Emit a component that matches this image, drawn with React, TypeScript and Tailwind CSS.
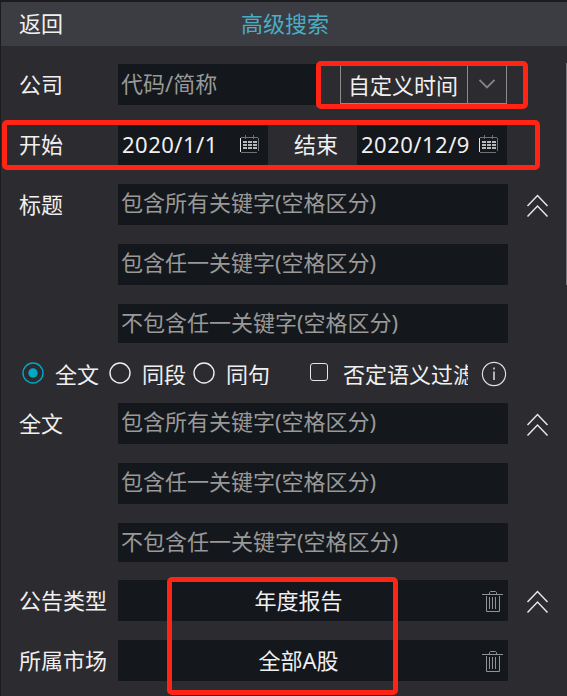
import React, { useState } from 'react';

const CalendarIcon = () => (
  <svg className="h-[18px] w-5 shrink-0" viewBox="0 0 20 18" fill="none" stroke="#b9b9ba" shapeRendering="crispEdges">
    <path stroke="#707174" d="M2 2.5H19M2 17.5H18" />
    <path stroke="#e2e2e2" d="M1.5 3V17" />
    <path stroke="#707174" d="M19.5 3V16M6.5 0V4M14.5 0V4" />
    <path strokeWidth="2" strokeDasharray="4 1" d="M4 7H18M4 10H18M4 13H18" />
  </svg>
);

const TrashIcon = () => (
  <svg className="h-[22px] w-[21px] shrink-0" viewBox="0 0 21 22" fill="none" stroke="#929395">
    <path d="M0 3.5H21" />
    <path d="M7.5 3.5V1.5L8.5 .5H13.5L14.5 1.5V3.5" />
    <path d="M4.5 5V20.5H17.5V5" />
    <path d="M7.5 6V18M10.5 6V18M13.5 6V18" />
  </svg>
);

const CollapseIcon = () => (
  <svg className="mt-2.5 ml-[18px] h-6 w-6 shrink-0" viewBox="0 0 24 24" fill="none" stroke="#e6e6e6" strokeWidth="1.5">
    <path d="M1.5 12L11.5 1.5L21.5 12M1.5 22.5L11.5 12L21.5 22.5" />
  </svg>
);

const InfoIcon = () => (
  <svg className="h-[26px] w-[26px]" viewBox="0 0 26 26" fill="none" stroke="#dedede" strokeWidth="1.2">
    <circle cx="13" cy="13" r="11.6" />
    <path strokeWidth="1.5" d="M13 10.5V19M13 6.5V8.5" />
  </svg>
);

const Row = ({ label, short, children }: { label?: string; short?: boolean; children: React.ReactNode }) => (
  <div className={`flex shrink-0 ${short ? 'h-[39px]' : 'mb-[19px] h-[41px]'}`}>
    <div className="w-[100px] shrink-0 pt-[4px] pl-px leading-8 whitespace-nowrap">{label}</div>
    {children}
  </div>
);

const KeywordInput = ({ placeholder }: { placeholder: string }) => (
  <div className="h-full w-[390px] shrink-0 bg-[#14171b] pt-[2px] pl-[3px] leading-8 text-[#999999]">{placeholder}</div>
);

const KeywordGroup = ({ label }: { label: string }) => (
  <>
    <Row label={label}>
      <KeywordInput placeholder="包含所有关键字(空格区分)" />
      <CollapseIcon />
    </Row>
    <Row>
      <KeywordInput placeholder="包含任一关键字(空格区分)" />
    </Row>
    <Row short>
      <KeywordInput placeholder="不包含任一关键字(空格区分)" />
    </Row>
  </>
);

const DateInput = ({ value }: { value: string }) => (
  <div className="flex h-[41px] w-[150px] shrink-0 justify-between bg-[#14171b] pr-[9px] pl-1">
    <span className="pt-[4px] leading-8 tracking-[0.5px]">{value}</span>
    <div className="pt-[11px]">
      <CalendarIcon />
    </div>
  </div>
);

const SelectedValue = ({ value }: { value: string }) => (
  <div className="flex h-full w-[390px] shrink-0 bg-[#14171b] pr-[5px]">
    <span className="flex-1 pt-[4px] pr-[7px] pl-1 text-center leading-8">{value}</span>
    <div className="pt-[11px]">
      <TrashIcon />
    </div>
  </div>
);

const Radio = ({ label, checked, onSelect }: { label: string; checked: boolean; onSelect: () => void }) => (
  <button onClick={onSelect} className="flex shrink-0 text-left">
    <svg className="mt-[1px] h-[22px] w-[22px]" viewBox="0 0 22 22" fill="none">
      <circle cx="11" cy="11" r="10" stroke={checked ? '#00a9c4' : '#eeeeee'} strokeWidth="1.4" />
      {checked && <circle cx="11" cy="11" r="4.7" fill="#00a9c4" />}
    </svg>
    <span className="ml-[11px] h-6 overflow-hidden leading-[27px] whitespace-nowrap">{label}</span>
  </button>
);

const App: React.FC = () => {
  const [scope, setScope] = useState('全文');

  return (
    <div className="relative flex h-[696px] w-[567px] flex-col overflow-hidden border-t-2 border-l border-t-[#1c1c20] border-l-[#1c1c20] bg-[#2c2b30] font-['Noto_Sans','Noto_Sans_CJK_SC',sans-serif] text-[22px] text-[#f0f0f0]">
      <div className="flex h-11 shrink-0 bg-[#3c3c43] pl-[18px] leading-[43px]">
        <span className="w-[222px]">返回</span>
        <span className="text-[#4badc4]">高级搜索</span>
      </div>

      <div className="flex flex-col pt-[18px] pl-[17px]">
        <Row label="公司">
          <div className="w-[198px] shrink-0 bg-[#14171b] pt-[3px] pl-[3px] leading-8 text-[#999999]">代码/简称</div>
          <div className="ml-6 flex h-10 w-[167px] border border-[#8b8b8d]">
            <div className="w-[127px] border-r border-[#8b8b8d] pt-[4px] pr-0.5 text-center leading-8">自定义时间</div>
            <div className="flex flex-1 items-center justify-center">
              <svg className="h-2.5 w-4" viewBox="0 0 16 10" fill="none" stroke="#858587" strokeWidth="1.8">
                <path d="M.5 1L8 8.5L15.5 1" />
              </svg>
            </div>
          </div>
        </Row>

        <Row label="开始">
          <DateInput value="2020/1/1" />
          <div className="w-[89px] shrink-0 pt-[4px] pl-[26px] leading-8">结束</div>
          <DateInput value="2020/12/9" />
        </Row>

        <KeywordGroup label="标题" />

        <div className="flex h-[60px] shrink-0 pt-[18px] pl-1">
          <Radio label="全文" checked={scope === '全文'} onSelect={() => setScope('全文')} />
          <div className="ml-2.5 flex gap-[7px]">
            <Radio label="同段" checked={scope === '同段'} onSelect={() => setScope('同段')} />
            <Radio label="同句" checked={scope === '同句'} onSelect={() => setScope('同句')} />
          </div>
          <div className="mt-0.5 ml-10 h-[18px] w-[18px] shrink-0 rounded-[3px] border-[1.5px] border-[#e6e6e6]" />
          <div className="ml-[15px] h-6 w-[125px] shrink-0 overflow-hidden leading-[27px] whitespace-nowrap">否定语义过滤</div>
          <div className="ml-[13px]">
            <InfoIcon />
          </div>
        </div>

        <KeywordGroup label="全文" />

        <div className="mt-[18px]">
          <Row label="公告类型">
            <SelectedValue value="年度报告" />
            <CollapseIcon />
          </Row>
          <Row label="所属市场">
            <SelectedValue value="全部A股" />
          </Row>
        </div>
      </div>

      {/* scrollbar thumb */}
      <div className="absolute top-[61px] right-0 h-[222px] w-px bg-[#77777b]" />

      {/* highlighted areas */}
      <div className="absolute top-[59px] left-[315px] h-12 w-[212px] rounded-[5px] border-[5px] border-[#ff2413]" />
      <div className="absolute top-[118px] left-px h-[50px] w-[538px] rounded-[5px] border-[5px] border-[#ff2413]" />
      <div className="absolute top-[575px] left-[166px] h-[118px] w-[231px] rounded-[5px] border-[5px] border-[#ff2413]" />
    </div>
  );
};

export default App;
